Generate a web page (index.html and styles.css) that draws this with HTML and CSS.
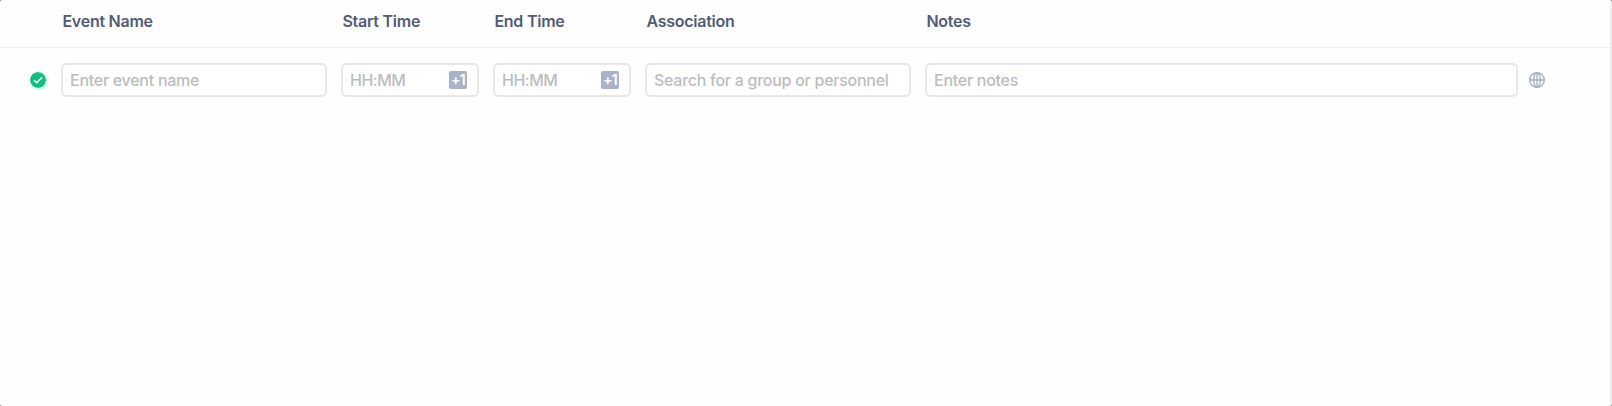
FILE: index.html
```html
<!DOCTYPE html>
<html lang="en">
<head>
<meta charset="utf-8">
<title>Events</title>
<link rel="stylesheet" href="styles.css">
</head>
<body>
<main class="panel">
  <header class="grid head">
    <span></span>
    <span class="label">Event Name</span>
    <span class="label">Start Time</span>
    <span class="label">End Time</span>
    <span class="label">Association</span>
    <span class="label">Notes</span>
    <span></span>
  </header>
  <section class="grid row">
    <svg class="check" viewBox="0 0 16 16"><circle cx="8" cy="8" r="8"/><path d="M4.4 8.6l2.4 2.1 4.8-5"/></svg>
    <label class="field"><input class="input" placeholder="Enter event name"></label>
    <label class="field"><input class="input time" placeholder="HH:MM"><span class="badge">+1</span></label>
    <label class="field"><input class="input time" placeholder="HH:MM"><span class="badge">+1</span></label>
    <label class="field"><input class="input" placeholder="Search for a group or personnel"></label>
    <label class="field"><input class="input" placeholder="Enter notes"></label>
    <svg class="globe" viewBox="0 0 16 16"><circle cx="8" cy="8" r="7.3"/><ellipse cx="8" cy="8" rx="3.3" ry="7.3"/><path d="M.7 8h14.6M8 .7v14.6"/></svg>
  </section>
</main>
</body>
</html>
```
FILE: styles.css
```css
* { box-sizing: border-box; }
body {
  margin: 0;
  height: 406px;
  overflow: hidden;
  background: linear-gradient(#555, #999 3px, #999 403px, #555);
  font-family: Inter, "Liberation Sans", sans-serif;
}
.panel {
  height: 406px;
  background: #fefefe;
  border-right: 2px solid #efeff0;
  border-radius: 2px;
}
.grid {
  display: grid;
  grid-template-columns: 17px 266px 138px 138px 266px 593px 17px;
  padding-left: 30px;
  column-gap: 14px;
}
.head {
  height: 48px;
  padding-top: 11px;
  border-bottom: 1px solid #f0f0f2;
}
.label {
  padding-left: 1.4px;
  font-size: 16px;
  line-height: 21px;
  font-weight: 600;
  letter-spacing: -0.25px;
  color: #535c74;
  white-space: nowrap;
}
.row {
  padding-top: 15px;
  align-items: center;
}
.field {
  display: flex;
  align-items: center;
  height: 34px;
  padding: 0 10px 0 7px;
  border: 2px solid #e7e8ee;
  border-radius: 5px;
  background: #fff;
}
.input {
  flex: 1;
  min-width: 0;
  padding: 0;
  border: 0;
  outline: 0;
  background: none;
  font: 450 16px/22px Inter, "Liberation Sans", sans-serif;
  letter-spacing: -0.27px;
}
.time { letter-spacing: -0.5px; }
.input::placeholder { color: #bcbcbe; opacity: 1; }
.badge {
  width: 18px;
  height: 18px;
  border-radius: 2px;
  background: #a8b2c9;
  color: #fff;
  font-size: 14px;
  line-height: 18px;
  font-weight: 600;
  letter-spacing: -0.6px;
  text-align: center;
}
.check {
  width: 16px;
  height: 16px;
  border-radius: 50%;
  box-shadow: 1px 1px 3px #7df5cd;
  fill: #1abb80;
}
.check path {
  fill: none;
  stroke: #d5ffef;
  stroke-width: 1.6;
  stroke-linecap: round;
  stroke-linejoin: round;
}
.globe {
  width: 16px;
  height: 16px;
  margin-left: -3px;
  fill: none;
  stroke: #a9b1c5;
  stroke-width: 1.4;
}
```
